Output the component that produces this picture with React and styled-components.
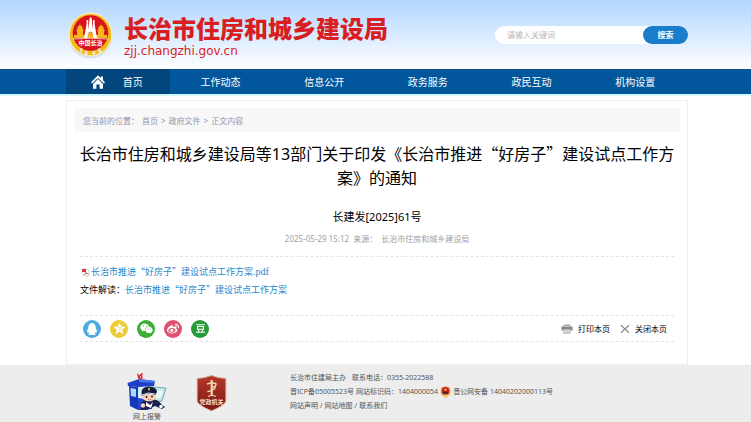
import React, { useState } from 'react';
import styled, { createGlobalStyle } from 'styled-components';
import { FaQq, FaWeixin, FaWeibo } from 'react-icons/fa';
import { SiDouban } from 'react-icons/si';

const GlobalStyle = createGlobalStyle`
  * {
    box-sizing: border-box;
  }

  html, body {
    margin: 0;
    padding: 0;
    background: #fff;
  }

  body {
    font-family: "Noto Sans", "Noto Sans CJK SC", sans-serif;
    color: #000;
  }

  a {
    color: inherit;
    text-decoration: none;
  }
`;

const Page = styled.div`
  min-height: 100vh;
  display: flex;
  flex-direction: column;
`;

const Wrap = styled.div`
  margin: 0 63px 0 66px;
`;

const Header = styled.header`
  background: linear-gradient(#b3d6ff, #dbecff 55%, #fff);
`;

const HeaderInner = styled(Wrap)`
  height: 69px;
  display: flex;
  align-items: center;
`;

const Brand = styled.a`
  display: flex;
  align-items: center;
  gap: 11px;
  padding-left: 1px;
  color: #d81e20;
`;

const BrandName = styled.div`
  font-family: "Noto Sans CJK SC", sans-serif;
  font-size: 24px;
  font-weight: 900;
  line-height: 32px;
  white-space: nowrap;
`;

const BrandDomain = styled.div`
  font-family: "DejaVu Sans", sans-serif;
  font-size: 12px;
  line-height: 14px;
`;

const SearchForm = styled.form`
  display: flex;
  width: 193px;
  height: 18px;
  margin-left: auto;
  background: #fff;
  border-radius: 9px;
`;

const SearchInput = styled.input`
  flex: 1;
  min-width: 0;
  padding: 0 12px;
  border: 0;
  outline: 0;
  background: transparent;
  font: inherit;
  font-size: 8px;

  &::placeholder {
    color: #b5b5b5;
  }
`;

const SearchButton = styled.button`
  width: 45px;
  padding: 0;
  border: 0;
  border-radius: 9px;
  background: #1a7dcb;
  color: #fff;
  font: inherit;
  font-size: 8px;
  font-weight: 700;
  cursor: pointer;
`;

const Nav = styled.nav`
  background: #02569b;
  border-bottom: 2px solid #d3f6fc;
`;

const NavList = styled(Wrap)`
  display: grid;
  grid-template-columns: repeat(6, 1fr);
`;

const NavItem = styled.a`
  display: flex;
  align-items: center;
  justify-content: center;
  gap: 18px;
  height: 25px;
  padding-right: 2px;
  color: #fff;
  font-size: 10px;
  background: ${props => props.$active ? '#03467d' : 'transparent'};
`;

const Main = styled.main`
  margin: 4px 63px 0 66px;
  padding: 7px 7px 22px;
  border: 1px solid #f0f0f0;
`;

const Breadcrumb = styled.div`
  display: flex;
  align-items: center;
  gap: 3px;
  height: 24px;
  padding: 0 9px;
  background: #f8f8f8;
  color: #9494ae;
  font-size: 8px;
`;

const Article = styled.article`
  padding: 0 6px;
`;

const Title = styled.h1`
  margin: 10px -4px 0;
  font-family: "Noto Sans CJK SC", sans-serif;
  font-size: 16px;
  font-weight: 400;
  line-height: 23px;
  text-align: center;
`;

const Latin = styled.span`
  font-family: "Noto Sans", sans-serif;
`;

const DocNumber = styled.div`
  margin-top: 20px;
  font-size: 11px;
  line-height: 16px;
  text-align: center;
`;

const Meta = styled.div`
  display: flex;
  justify-content: center;
  gap: 4px;
  padding: 8px 0 11px;
  border-bottom: 1px dashed #e4e4e4;
  color: #a0a0a0;
  font-size: 8px;
  line-height: 12px;
`;

const Content = styled.div`
  padding: 6px 0 16px;
  font-family: "Noto Sans CJK SC", sans-serif;
  font-size: 9px;
`;

const Line = styled.p`
  display: flex;
  align-items: center;
  margin: 0;
  line-height: 18px;
`;

const FileLink = styled.a`
  color: #2a86c8;
`;

const FileExt = styled.span`
  font-family: "Liberation Serif", serif;
  font-size: 10px;
`;

const Toolbar = styled.div`
  display: flex;
  align-items: center;
  justify-content: space-between;
  height: 27px;
  padding: 0 7px 0 3px;
  border-top: 1px dashed #e4e4e4;
  border-bottom: 1px dashed #e4e4e4;
`;

const ShareList = styled.div`
  display: flex;
  gap: 9px;
`;

const ShareButton = styled.button`
  display: flex;
  align-items: center;
  justify-content: center;
  width: 18px;
  height: 18px;
  padding: 0;
  border: 0;
  border-radius: 50%;
  background: ${props => props.$color};
  color: #fff;
  font-size: ${props => props.$size || 12}px;
  cursor: pointer;
`;

const PageActions = styled.div`
  display: flex;
  gap: 10px;
`;

const PageAction = styled.button`
  display: flex;
  align-items: center;
  gap: 5px;
  padding: 0;
  border: 0;
  background: none;
  color: #000;
  font: inherit;
  font-size: 8px;
  cursor: pointer;
`;

const Footer = styled.footer`
  flex: 1;
  background: #ededed;
`;

const FooterInner = styled(Wrap)`
  display: flex;
  align-items: flex-start;
  padding-left: 61px;
`;

const PoliceLink = styled.a`
  display: flex;
  flex-direction: column;
  align-items: center;
  width: 40px;
  margin-top: 7px;
  color: #555;
  font-size: 7px;
  line-height: 10px;
`;

const BadgeLink = styled.a`
  display: flex;
  margin: 10px 0 0 29px;
`;

const FooterInfo = styled.div`
  margin: 6px 0 0 63px;
  color: #555;
  font-size: 7px;
  line-height: 14px;
  white-space: nowrap;
`;

const FooterLine = styled.div`
  display: flex;
  align-items: center;
  gap: ${props => props.$gap || 2}px;
  height: 14px;
`;

const Emblem = () => (
  <svg width="46" height="48" viewBox="0 0 46 48" aria-hidden="true">
    <ellipse cx="23.5" cy="26" rx="21.5" ry="21.5" fill="#8b97a8" opacity="0.25" />
    <circle cx="23.5" cy="23.5" r="22" fill="#f9eec0" />
    <circle cx="23.5" cy="23.5" r="20.8" fill="#f2ba1d" />
    <circle cx="23.5" cy="22" r="17.8" fill="#d9141c" />
    <path d="M10 24V20H8.8L11 17.5H9.6L13 13.5L16.4 17.5H15L17.2 20H16V24ZM31 24V20H29.8L32 17.5H30.6L34 13.5L37.4 17.5H36L38.2 20H37V24Z" fill="#f4b71c" />
    <path d="M7 24H40V27H7Z" fill="#f4b71c" />
    <path d="M17 27L19.6 13V9H21.2V19L22.8 6.5H24.6L26 19V9H27.6V13L30 27H26.5L25 21H22L20.4 27Z" fill="#fff" />
    <path d="M19.5 26L23.5 20L27.5 26L23.5 23.5Z" fill="#f4b71c" />
    <path d="M6 28Q23.5 26.5 41 28" stroke="#fff" strokeWidth="0.7" fill="none" />
    <text x="23.5" y="34" textAnchor="middle" fontSize="6" fontWeight="700" fill="#fff">中国长治</text>
    <text x="12" y="41" fontSize="6" fontWeight="700" fill="#fff" transform="rotate(18 13 40)">1</text>
    <text x="17.6" y="43.8" fontSize="6" fontWeight="700" fill="#fff">9</text>
    <text x="25" y="43.8" fontSize="6" fontWeight="700" fill="#fff">4</text>
    <text x="31" y="42" fontSize="6" fontWeight="700" fill="#fff" transform="rotate(-18 32 40)">5</text>
  </svg>
);

const HomeIcon = () => (
  <svg width="14" height="14" viewBox="0 0 14 14" aria-hidden="true">
    <path d="M7 0.2L9.8 3V1.4H12V5.2L14 7.3L12.9 8.5L7 2.9L1.1 8.5L0 7.3Z" fill="#fff" />
    <path d="M2 8.9L7 4.1L12 8.9V13.8H8.6V9.6H5.4V13.8H2Z" fill="#fff" />
  </svg>
);

const PdfIcon = () => (
  <svg width="11" height="10" viewBox="0 0 11 10" aria-hidden="true">
    <path d="M3 2H7L9 4V9H3Z" fill="#fff" stroke="#b9b9b9" strokeWidth="0.6" />
    <path d="M2 2H6V5H2Z" fill="#cc3a48" />
    <path d="M4.3 8Q6.4 6.4 5.8 4.8M5.6 5.6Q6.6 7.2 8.3 6.6" stroke="#cc3a48" strokeWidth="0.9" fill="none" />
  </svg>
);

const QzoneIcon = () => (
  <svg width="13" height="13" viewBox="0 0 14 14" aria-hidden="true">
    <path d="M7 0.6L8.9 4.8L13.5 5.3L10.1 8.4L11.1 12.9L7 10.6L2.9 12.9L3.9 8.4L0.5 5.3L5.1 4.8Z" fill="#fff" />
    <path d="M4.8 6Q7 5.3 9.4 6L6.3 8.5Q8.4 9 10.5 8.4" stroke="#f0cd3a" strokeWidth="0.6" fill="none" />
  </svg>
);

const PrintIcon = () => (
  <svg width="12" height="10" viewBox="0 0 12 10" aria-hidden="true">
    <path d="M2.5 0.5H9.5V2H2.5Z" fill="#a8a8a8" />
    <path d="M0.5 2.5H11.5V6.5H9.5V5H2.5V6.5H0.5Z" fill="#858585" />
    <path d="M2.8 5.3H9.2V9.2H2.8Z" fill="#eee" stroke="#909090" strokeWidth="0.7" />
    <path d="M4 6.7H8M4 8H8" stroke="#aaa" strokeWidth="0.6" />
  </svg>
);

const CloseIcon = () => (
  <svg width="10" height="10" viewBox="0 0 10 10" aria-hidden="true">
    <path d="M1 1.2L9 8.8M9 1.2L1 8.8" stroke="#8d8d8d" strokeWidth="1.2" />
  </svg>
);

const PoliceIcon = () => (
  <svg width="40" height="40" viewBox="0 0 40 40" aria-hidden="true">
    <path d="M10 1L12 3L16 0.5L15 4L16 6L13 8L11 6Z" fill="#e5242b" />
    <path d="M12.5 3.5L14 5L13 6" stroke="#fff" strokeWidth="0.7" fill="none" />
    <path d="M0.5 11L12 7L28 9L27 14L11 15L1 14Z" fill="#1c3fc4" />
    <path d="M12 7L28 9L27 11L12 10Z" fill="#4a74e8" />
    <path d="M2 14L11 15V38L3 34Z" fill="#1638b8" />
    <path d="M3.5 16L9 17V25L4 24Z" fill="#a9dcf2" />
    <path d="M11 15H26V36L11 38Z" fill="#d4eef7" />
    <path d="M11 26L25 28V37L11 38Z" fill="#2348cf" />
    <path d="M26 15L39 16L35 29L26 30Z" fill="#c1e8e4" stroke="#5e9aa8" strokeWidth="0.8" />
    <path d="M29 18L36 18.5L33.5 26L29 26.5Z" fill="#e9f8f5" />
    <path d="M14 34Q14 27 22 27Q31 26 35 33L38 35L35 37L28 34L20 38H13Z" fill="#18204c" />
    <ellipse cx="22" cy="24.5" rx="7" ry="5" fill="#f6d3bd" />
    <path d="M14.5 21Q14 15 22 14.5Q30 15 30 20L28 23Q21 20 15 24Z" fill="#141c42" />
    <path d="M15 23Q21 19.5 28 22" stroke="#dce4f4" strokeWidth="1" fill="none" />
    <path d="M21 16L23 16L22.5 18.5H21.5Z" fill="#f4cf45" />
    <circle cx="19.5" cy="25" r="0.9" fill="#111" />
    <circle cx="25" cy="24.5" r="0.9" fill="#111" />
    <path d="M21 27.5Q22.5 28.5 24 27.4" stroke="#b13b32" strokeWidth="0.7" fill="none" />
    <path d="M19 30L23 33L26 30L24 36L19 34Z" fill="#fff" />
    <circle cx="16" cy="33.5" r="2.2" fill="#f6d3bd" />
    <circle cx="34" cy="34.5" r="1.8" fill="#fff" />
  </svg>
);

const PartyBadge = () => (
  <svg width="31" height="37" viewBox="0 0 31 37" aria-hidden="true">
    <defs>
      <linearGradient id="shield" x1="0" y1="0" x2="0" y2="1">
        <stop offset="0" stopColor="#b5392a" />
        <stop offset="1" stopColor="#7c1812" />
      </linearGradient>
    </defs>
    <path d="M15.5 0.6Q22 3.2 29.8 3.4V26Q29.5 30 15.5 35.8Q1.5 30 1.2 26V3.4Q9 3.2 15.5 0.6Z" fill="url(#shield)" stroke="#d9a584" strokeWidth="0.9" />
    <path d="M14.6 5H16.8V21H14.6Z" fill="#f3d9b5" />
    <path d="M11 9Q15.8 7.4 19.8 8.4Q21 12 15.7 11.8M19.6 12.4Q17 16 11.4 16.6" stroke="#f3d9b5" strokeWidth="1.5" fill="none" />
    <path d="M12 21.5Q15.8 19.5 19.8 21.5" stroke="#f3d9b5" strokeWidth="1.2" fill="none" />
    <text x="15.5" y="28.8" textAnchor="middle" fontSize="6" fontWeight="700" fill="#f5dfc3">党政机关</text>
  </svg>
);

const PoliceBadge = () => (
  <svg width="11" height="12" viewBox="0 0 11 12" aria-hidden="true">
    <path d="M5.5 0.3Q7 1.2 9.8 1.2L10.5 7Q9.5 10.5 5.5 11.8Q1.5 10.5 0.5 7L1.2 1.2Q4 1.2 5.5 0.3Z" fill="#e6b349" />
    <circle cx="5.5" cy="4.8" r="3.9" fill="#c8201f" />
    <path d="M5.5 1.8L6 3H7.2L6.2 3.8L6.6 5L5.5 4.3L4.4 5L4.8 3.8L3.8 3H5Z" fill="#f1c63f" />
    <path d="M2.8 5.8H8.2V7.3H2.8Z" fill="#2b2444" />
    <path d="M2 9.5Q5.5 11 9 9.5" stroke="#fff1c0" strokeWidth="0.7" fill="none" />
  </svg>
);

const navItems = ['首页', '工作动态', '信息公开', '政务服务', '政民互动', '机构设置'];

const shareItems = [
  { name: 'QQ', color: '#4fabe2', size: 12, icon: <FaQq /> },
  { name: 'QQ空间', color: '#eecb38', size: 12, icon: <QzoneIcon /> },
  { name: '微信', color: '#3eae38', size: 13, icon: <FaWeixin /> },
  { name: '微博', color: '#e0506f', size: 12, icon: <FaWeibo /> },
  { name: '豆瓣', color: '#279b39', size: 9, icon: <SiDouban /> },
];

const App = () => {
  const [keyword, setKeyword] = useState('');

  return (
    <>
      <GlobalStyle />
      <Page lang="zh-CN">
        <Header>
          <HeaderInner>
            <Brand href="#">
              <Emblem />
              <div>
                <BrandName>长治市住房和城乡建设局</BrandName>
                <BrandDomain>zjj.changzhi.gov.cn</BrandDomain>
              </div>
            </Brand>
            <SearchForm onSubmit={e => e.preventDefault()}>
              <SearchInput
                type="text"
                aria-label="请输入关键词"
                placeholder="请输入关键词"
                value={keyword}
                onChange={e => setKeyword(e.target.value)}
              />
              <SearchButton type="submit">搜索</SearchButton>
            </SearchForm>
          </HeaderInner>
        </Header>

        <Nav>
          <NavList>
            {navItems.map((item, index) => (
              <NavItem key={item} href="#" $active={index === 0}>
                {index === 0 && <HomeIcon />}
                {item}
              </NavItem>
            ))}
          </NavList>
        </Nav>

        <Main>
          <Breadcrumb>
            <span>您当前的位置：</span>
            <a href="#">首页</a>
            <span>&gt;</span>
            <a href="#">政府文件</a>
            <span>&gt;</span>
            <span>正文内容</span>
          </Breadcrumb>

          <Article>
            <Title>
              长治市住房和城乡建设局等<Latin>13</Latin>部门关于印发《长治市推进“好房子”建设试点工作方案》的通知
            </Title>
            <DocNumber>长建发[2025]61号</DocNumber>
            <Meta>
              <span>2025-05-29 15:12</span>
              <span>来源：</span>
              <span>长治市住房和城乡建设局</span>
            </Meta>

            <Content>
              <Line>
                <PdfIcon />
                <FileLink href="#">
                  长治市推进“好房子”建设试点工作方案<FileExt>.pdf</FileExt>
                </FileLink>
              </Line>
              <Line>
                <span>文件解读：</span>
                <FileLink href="#">长治市推进“好房子”建设试点工作方案</FileLink>
              </Line>
            </Content>

            <Toolbar>
              <ShareList>
                {shareItems.map(item => (
                  <ShareButton
                    key={item.name}
                    type="button"
                    aria-label={item.name}
                    $color={item.color}
                    $size={item.size}
                  >
                    {item.icon}
                  </ShareButton>
                ))}
              </ShareList>
              <PageActions>
                <PageAction type="button" onClick={() => window.print()}>
                  <PrintIcon />
                  打印本页
                </PageAction>
                <PageAction type="button" onClick={() => window.close()}>
                  <CloseIcon />
                  关闭本页
                </PageAction>
              </PageActions>
            </Toolbar>
          </Article>
        </Main>

        <Footer>
          <FooterInner>
            <PoliceLink href="#">
              <PoliceIcon />
              网上报警
            </PoliceLink>
            <BadgeLink href="#" aria-label="党政机关">
              <PartyBadge />
            </BadgeLink>
            <FooterInfo>
              <FooterLine $gap={6}>
                <span>长治市住建局主办</span>
                <span>联系电话：0355-2022588</span>
              </FooterLine>
              <FooterLine>
                <a href="#">晋ICP备05005523号</a>
                <span>网站标识码：1404000054</span>
                <PoliceBadge />
                <a href="#">晋公网安备 14040202000113号</a>
              </FooterLine>
              <FooterLine>
                <a href="#">网站声明</a>
                <span>/</span>
                <a href="#">网站地图</a>
                <span>/</span>
                <a href="#">联系我们</a>
              </FooterLine>
            </FooterInfo>
          </FooterInner>
        </Footer>
      </Page>
    </>
  );
};

export default App;
